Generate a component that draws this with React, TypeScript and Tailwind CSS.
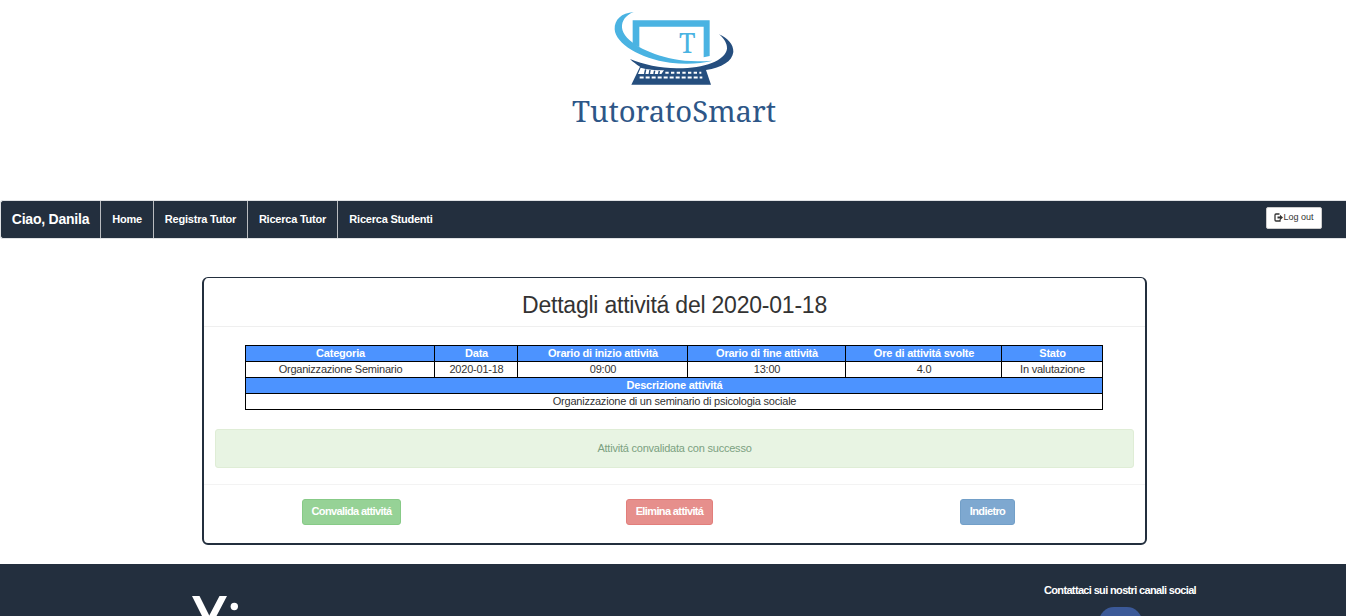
import React from "react";

function Logo() {
  return (
    <svg width="230" height="140" viewBox="0 0 690 420" className="block">
      <path d="M218 61H449V168L431 172V80H238V142L218 132Z" fill="#4ab3e2" />
      <path
        d="M221 36C184 39 163 59 164 88C166 130 240 177 330 188C375 193 420 192 458 182C410 185 375 184 340 177C265 162 190 124 186 83C185 63 196 46 221 36Z"
        fill="#4ab3e2"
      />
      <path
        d="M210 177C250 194 300 204 350 205C430 206 496 182 501 146C502 131 492 115 477 103C503 114 521 134 520 156C517 184 485 203 438 210L453 254H214L240 200C229 193 219 186 210 177Z"
        fill="#254e7e"
      />
      <path d="M242 203L234 222H304L312 211C285 211 261 209 242 203Z" fill="#fff" />
      <path d="M254 222L257 208M268 222L270 210M282 222L284 212M296 222L298 213" stroke="#254e7e" strokeWidth="4.500" />
      <path d="M316 218H424" stroke="#fff" strokeWidth="6" strokeDasharray="10 7" />
      <path d="M239 232.500H427" stroke="#fff" strokeWidth="5.500" strokeDasharray="12 6" />
      <text x="357" y="159" fontFamily="'Noto Serif','Liberation Serif',serif" fontSize="84" textLength="49" lengthAdjust="spacingAndGlyphs" fill="#4ab3e2">T</text>
      <text x="36" y="367" fontFamily="'Noto Serif','DejaVu Serif',serif" fontSize="86" textLength="612" lengthAdjust="spacingAndGlyphs" fill="#2d5687">TutoratoSmart</text>
    </svg>
  );
}

function LogoutIcon() {
  return (
    <svg width="9" height="9" viewBox="0 0 9 9" className="block">
      <path d="M5.500 1H2Q1 1 1 2V7Q1 8 2 8H6V6.500" fill="none" stroke="#333" strokeWidth="1.300" />
      <path d="M3.500 3.500H6V1.800L9 4.500L6 7.200V5.500H3.500Z" fill="#333" />
    </svg>
  );
}

const links = [
  { label: "Home", cls: "w-[53px]" },
  { label: "Registra Tutor", cls: "w-[94px]" },
  { label: "Ricerca Tutor", cls: "w-[90px]" },
  { label: "Ricerca Studenti", cls: "w-[106px] border-r-0" },
];

const columns = [
  { head: "Categoria", value: "Organizzazione Seminario", w: "w-[189px]" },
  { head: "Data", value: "2020-01-18", w: "w-[83px]" },
  { head: "Orario di inizio attività", value: "09:00", w: "w-[170px]" },
  { head: "Orario di fine attività", value: "13:00", w: "w-[158px]" },
  { head: "Ore di attivitá svolte", value: "4.0", w: "w-[156px]" },
  { head: "Stato", value: "In valutazione", w: "w-[101px]" },
];

const headCell = "h-4 border border-black bg-[#4c93ff] p-0 pl-px text-center font-bold text-white";
const cell = "h-4 border border-black p-0 pl-px text-center";
const button = "h-[26px] rounded-[3px] border pb-px font-bold tracking-[-0.62px] text-white";

export default function App() {
  return (
    <div className="flex h-[616px] flex-col overflow-hidden bg-white font-['Liberation_Sans',Arial,sans-serif] text-[11px] leading-[15px] tracking-[-0.22px] text-[#333]">
      <header className="h-[200px] shrink-0 pl-[560px]">
        <Logo />
      </header>

      <nav className="flex h-[39px] shrink-0 items-stretch rounded-l-[3px] border border-r-0 border-[#e0e2e5] bg-[#232f3e] font-bold text-white">
        <div className="flex w-[100px] items-center justify-center border-r border-[#b9bcc0] text-[14px]">Ciao, Danila</div>
        {links.map((l) => (
          <a key={l.label} className={`flex items-center justify-center border-r border-[#b9bcc0] ${l.cls}`}>
            {l.label}
          </a>
        ))}
        <button className="mt-1.5 mr-6 ml-auto flex h-[22px] w-14 items-center justify-center rounded-xs border border-[#ccc] bg-white pb-0.5 text-[9px] font-normal tracking-normal text-[#333]">
          <LogoutIcon />
          Log out
        </button>
      </nav>

      <main className="mt-[38px] ml-[202px] h-[268px] w-[945px] shrink-0 rounded-md border-2 border-t border-[#232f3e]">
        <h1 className="h-[49px] border-b border-[#efefef] pt-[13px] text-center text-[23px] leading-7 tracking-[-0.22px]">
          Dettagli attivitá del 2020-01-18
        </h1>
        <table className="mt-[18px] ml-[41px] w-[858px] table-fixed border-collapse leading-[15px]">
          <thead>
            <tr>
              {columns.map((c) => (
                <th key={c.head} className={`${headCell} ${c.w}`}>{c.head}</th>
              ))}
            </tr>
          </thead>
          <tbody>
            <tr>
              {columns.map((c) => (
                <td key={c.head} className={cell}>{c.value}</td>
              ))}
            </tr>
            <tr>
              <th colSpan={6} className={headCell}>Descrizione attivitá</th>
            </tr>
            <tr>
              <td colSpan={6} className={cell}>Organizzazione di un seminario di psicologia sociale</td>
            </tr>
          </tbody>
        </table>
        <div className="mt-[19px] mr-[11px] ml-[11px] flex h-[39px] items-center justify-center rounded-[3px] border border-[#dfedd6] bg-[#e8f4e3] text-[#7ba181]">
          Attivitá convalidata con successo
        </div>
        <div className="mt-4 flex border-t border-[#f3f3f3] pt-3.5">
          <button className={`${button} ml-[98px] w-[99px] border-[#87ca87] bg-[#96d296]`}>Convalida attivitá</button>
          <button className={`${button} ml-[225px] w-[87px] border-[#e27e7b] bg-[#e68f8c]`}>Elimina attivitá</button>
          <button className={`${button} ml-[247px] w-[55px] border-[#729fc8] bg-[#7ea8d0]`}>Indietro</button>
        </div>
      </main>

      <footer className="mt-[19px] flex h-[52px] shrink-0 items-start overflow-hidden bg-[#232f3e] text-white">
        <svg width="60" height="21" viewBox="0 0 60 21" className="mt-[31px] ml-[190px]">
          <path d="M2 1H9.500L19.500 21H12ZM37 1H29.500L19 21H26.500Z" fill="#fff" />
          <circle cx="44.300" cy="11.500" r="3.700" fill="#fff" />
        </svg>
        <div className="ml-[770px] flex w-[200px] flex-col items-center pt-[19px] font-bold">
          <div className="tracking-[-0.65px] whitespace-nowrap">Contattaci sui nostri canali social</div>
          <div className="mt-[9px] h-[43px] w-[43px] shrink-0 rounded-[15px] bg-[#3b5998]" />
        </div>
      </footer>
    </div>
  );
}
